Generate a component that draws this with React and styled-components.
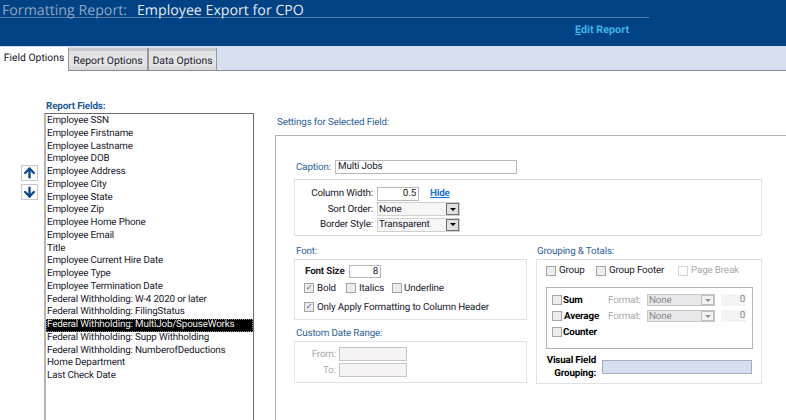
import React from "react";
import styled, { createGlobalStyle } from "styled-components";
import { ArrowUp, ArrowDown } from "lucide-react";

const GlobalStyle = createGlobalStyle`
  html, body { margin: 0; padding: 0; background: #fff; }
  body {
    font-family: Roboto, Tahoma, sans-serif;
    font-size: 9.8px;
    letter-spacing: -0.15px;
    text-rendering: geometricPrecision;
    color: #20202c;
  }
`;

const Page = styled.div`
  width: 786px;
  height: 420px;
  overflow: hidden;
`;

const Header = styled.header`
  height: 46px;
  box-sizing: border-box;
  background: #004283;
  padding-top: 1px;
`;

const TitleBar = styled.div`
  width: 649px;
  height: 17px;
  box-sizing: border-box;
  border-bottom: 1px solid #5a7ca6;
  padding-left: 2px;
  display: flex;
  gap: 10px;
  font-family: "Open Sans", sans-serif;
  font-size: 14.2px;
  letter-spacing: 0;
  line-height: 19px;
  white-space: nowrap;
`;

const TitleLabel = styled.span`
  color: #8fa6c4;
`;

const TitleName = styled.span`
  color: #e4ebf4;
`;

const EditRow = styled.div`
  padding: 5px 0 0 575px;
`;

const EditLink = styled.a`
  color: #45b4ee;
  font-weight: 700;
  font-size: 10.6px;
  letter-spacing: 0.1px;
  line-height: 13px;
  span { text-decoration: underline; }
`;

const TabBar = styled.nav`
  height: 25px;
  box-sizing: border-box;
  background: #d6dfef;
  border-bottom: 1px solid #8c8c94;
  display: flex;
  align-items: flex-end;
`;

const Tab = styled.div`
  height: ${(p) => (p.$active ? "24px" : "23px")};
  box-sizing: border-box;
  width: ${(p) => p.$w}px;
  margin-bottom: -1px;
  line-height: ${(p) => (p.$active ? "22px" : "25px")};
  font-size: 10.4px;
  letter-spacing: 0;
  text-align: center;
  color: #20202c;
  background: ${(p) => (p.$active ? "#fff" : "linear-gradient(#c8c8d0 0 3px, #e4e4e6 3px 75%, #d4d4d6)")};
  border-left: ${(p) => (p.$active ? "0" : "1px solid #96969c")};
  border-right: ${(p) => (p.$active ? "0" : "1px solid #96969c")};
  border-bottom: ${(p) => (p.$active ? "0" : "1px solid #8c8c94")};
`;

const Body = styled.main`
  display: flex;
  overflow: hidden;
`;

const LeftColumn = styled.section`
  width: 275px;
  flex: none;
  padding-top: 30px;
  box-sizing: border-box;
  display: grid;
  grid-template-columns: 44px 210px;
  grid-template-rows: 12px auto;
`;

const FieldsLabel = styled.div`
  grid-column: 2;
  padding-left: 2px;
  font-weight: 700;
  line-height: 12px;
  color: #1f5795;
`;

const Movers = styled.div`
  grid-column: 1;
  padding: 52px 0 0 21px;
  display: flex;
  flex-direction: column;
  gap: 3px;
`;

const MoveButton = styled.button`
  width: 17px;
  height: 16px;
  padding: 0;
  display: flex;
  align-items: center;
  justify-content: center;
  background: #fff;
  border: 1px solid #c8c8cc;
  color: #0a4a8c;
`;

const ListBox = styled.ul`
  grid-column: 2;
  list-style: none;
  margin: 0;
  padding: 1px 0 60px;
  height: 330px;
  border: 1px solid #6c6c6c;
  border-left: 2px solid #b4b4b4;
  box-sizing: border-box;
`;

const ListItem = styled.li`
  height: 12.75px;
  line-height: 12.75px;
  padding-left: 1px;
  white-space: nowrap;
  background: ${(p) => (p.$selected ? "#000" : "transparent")};
  color: ${(p) => (p.$selected ? "#f0f0f0" : "#20202c")};
  outline: ${(p) => (p.$selected ? "1px dotted #888" : "none")};
  outline-offset: -1px;
`;

const RightColumn = styled.section`
  flex: none;
  width: 540px;
  padding-top: 45px;
`;

const SectionTitle = styled.div`
  color: #2e5f98;
  line-height: 13px;
  padding-left: ${(p) => p.$pad ?? 2}px;
`;

const SettingsPanel = styled.div`
  margin-top: 6px;
  border: 1px solid #b0b0b8;
  border-right: 0;
  height: 300px;
  box-sizing: border-box;
  padding: 24px 0 0 18px;
`;

const CaptionRow = styled.div`
  display: flex;
  align-items: center;
  height: 14px;
  padding-left: 2px;
  color: #2e5f98;
`;

const CaptionLabel = styled.span`
  width: 39px;
  flex: none;
`;

const TextField = styled.div`
  box-sizing: border-box;
  width: ${(p) => p.$w}px;
  height: ${(p) => p.$h ?? 14}px;
  line-height: ${(p) => (p.$h ?? 14) - 2}px;
  padding: 0 2px;
  border: 1px solid ${(p) => p.$line ?? "#b8b8bc"};
  background: ${(p) => p.$bg ?? "#fff"};
  color: #20202c;
  text-align: ${(p) => (p.$right ? "right" : "left")};
`;

const GroupBox = styled.div`
  box-sizing: border-box;
  border: 1px solid #e2e2e6;
  width: ${(p) => p.$w}px;
  height: ${(p) => p.$h}px;
  padding: ${(p) => p.$pad ?? "0"};
`;

const ColumnBox = styled(GroupBox)`
  margin-top: 5px;
  display: grid;
  grid-template-columns: 74px auto;
  grid-auto-rows: 15.5px;
  column-gap: 4px;
  justify-content: start;
  align-items: center;
`;

const RowLabel = styled.span`
  text-align: right;
  white-space: nowrap;
`;

const InlineRow = styled.div`
  display: flex;
  align-items: center;
  gap: ${(p) => p.$gap ?? 0}px;
`;

const HideLink = styled.a`
  color: #1a72d8;
  font-weight: 700;
  text-decoration: underline;
  margin-left: 11px;
`;

const Select = styled.div`
  box-sizing: border-box;
  width: ${(p) => p.$w}px;
  height: ${(p) => p.$h ?? 14}px;
  padding-left: 1px;
  display: flex;
  align-items: center;
  justify-content: space-between;
  background: ${(p) => (p.$disabled ? "#e8e8ea" : "#f6f6f6")};
  border: 1px solid ${(p) => (p.$disabled ? "#c4c4c8" : "#d0d0d0")};
  color: ${(p) => (p.$disabled ? "#8a8a8e" : "#20202c")};
`;

const SelectButton = styled.span`
  width: 13px;
  height: 100%;
  box-sizing: border-box;
  flex: none;
  display: flex;
  align-items: center;
  justify-content: center;
  background: ${(p) => (p.$disabled ? "#f2f2f2" : "#e0e0e0")};
  border: 1px solid ${(p) => (p.$disabled ? "#c0c0c4" : "#707070")};
  &::after {
    content: "";
    border-left: 3px solid transparent;
    border-right: 3px solid transparent;
    border-top: 3px solid ${(p) => (p.$disabled ? "#909094" : "#000")};
  }
`;

const LowerGrid = styled.div`
  display: flex;
  gap: 9px;
  margin-top: 7px;
`;

const LowerColumn = styled.div`
  width: ${(p) => p.$w}px;
`;

const GroupHeading = styled(SectionTitle)`
  height: 16px;
  line-height: 17px;
  margin-top: ${(p) => p.$top ?? 0}px;
`;

const Box = styled.span`
  box-sizing: border-box;
  flex: none;
  width: 10px;
  height: 10px;
  display: inline-flex;
  align-items: center;
  justify-content: center;
  background: ${(p) => (p.$faint ? "#fff" : "#ececec")};
  border: 1px solid ${(p) => (p.$faint ? "#d4d4d8" : "#a4a4a8")};
  color: #3a5f98;
  font-size: 8px;
  line-height: 1;
`;

const CheckLabel = styled.span`
  white-space: nowrap;
  width: ${(p) => (p.$w ? `${p.$w}px` : "auto")};
  flex: none;
  padding-left: ${(p) => p.$pad ?? 3}px;
  box-sizing: border-box;
  color: ${(p) => (p.$faint ? "#a8a8ac" : "inherit")};
`;

const FontRow = styled(InlineRow)`
  height: ${(p) => p.$h}px;
`;

const BoldLabel = styled.span`
  font-weight: 700;
  width: 40px;
  flex: none;
  padding-left: 1px;
  white-space: nowrap;
  box-sizing: border-box;
`;

const DateRow = styled.div`
  display: flex;
  align-items: center;
  height: 16px;
`;

const DateLabel = styled.span`
  width: 41px;
  text-align: right;
  color: #a8a8ac;
  margin-right: 3px;
`;

const TotalsBox = styled.div`
  box-sizing: border-box;
  width: 207px;
  height: 62px;
  margin-top: 11px;
  border: 1px solid #b4b4b8;
  padding: 4px 0 0 5px;
`;

const TotalsRow = styled.div`
  display: grid;
  grid-template-columns: 56px 39px 68px 6px 25px;
  align-items: center;
  height: 16px;
`;

const TotalName = styled.div`
  display: flex;
  align-items: center;
  gap: ${(p) => p.$gap}px;
  font-weight: 700;
  color: #000;
`;

const FormatLabel = styled.span`
  color: #a8a8ac;
`;

const ZeroField = styled.div`
  grid-column: 5;
  height: 12px;
  line-height: 12px;
  background: #f6f3f4;
  text-align: right;
  color: #8a8a8e;
  padding-right: 1px;
`;

const VisualRow = styled.div`
  display: flex;
  align-items: center;
  gap: 6px;
  margin-top: 5px;
`;

const VisualLabel = styled.div`
  width: 50px;
  flex: none;
  text-align: right;
  font-weight: 700;
  line-height: 13px;
  color: #000;
  white-space: nowrap;
`;

const VisualBar = styled.div`
  width: 150px;
  height: 14px;
  box-sizing: border-box;
  background: #d6dfef;
  border: 1px solid #a8aebc;
`;

const FIELDS = [
  "Employee SSN",
  "Employee Firstname",
  "Employee Lastname",
  "Employee DOB",
  "Employee Address",
  "Employee City",
  "Employee State",
  "Employee Zip",
  "Employee Home Phone",
  "Employee Email",
  "Title",
  "Employee Current Hire Date",
  "Employee Type",
  "Employee Termination Date",
  "Federal Withholding: W-4 2020 or later",
  "Federal Withholding: FilingStatus",
  "Federal Withholding: MultiJob/SpouseWorks",
  "Federal Withholding: Supp Withholding",
  "Federal Withholding: NumberofDeductions",
  "Home Department",
  "Last Check Date",
];

function TotalLine({ name, gap, format }) {
  return (
    <TotalsRow>
      <TotalName $gap={gap}>
        <Box />
        {name}
      </TotalName>
      {format && (
        <>
          <FormatLabel>Format:</FormatLabel>
          <Select $w={68} $h={12} $disabled>
            None
            <SelectButton $disabled />
          </Select>
          <ZeroField>0</ZeroField>
        </>
      )}
    </TotalsRow>
  );
}

export default function App() {
  return (
    <Page>
      <GlobalStyle />
      <Header>
        <TitleBar>
          <TitleLabel>Formatting Report:</TitleLabel>
          <TitleName>Employee Export for CPO</TitleName>
        </TitleBar>
        <EditRow>
          <EditLink>
            <span>E</span>dit Report
          </EditLink>
        </EditRow>
      </Header>
      <TabBar>
        <Tab $active $w={68}>Field Options</Tab>
        <Tab $w={80}>Report Options</Tab>
        <Tab $w={69}>Data Options</Tab>
      </TabBar>
      <Body>
        <LeftColumn>
          <FieldsLabel>Report Fields:</FieldsLabel>
          <div />
          <Movers>
            <MoveButton><ArrowUp size={16} strokeWidth={3.8} /></MoveButton>
            <MoveButton><ArrowDown size={16} strokeWidth={3.8} /></MoveButton>
          </Movers>
          <ListBox>
            {FIELDS.map((f) => (
              <ListItem key={f} $selected={f.includes("MultiJob")}>{f}</ListItem>
            ))}
          </ListBox>
        </LeftColumn>
        <RightColumn>
          <SectionTitle>Settings for Selected Field:</SectionTitle>
          <SettingsPanel>
            <CaptionRow>
              <CaptionLabel>Caption:</CaptionLabel>
              <TextField $w={182}>Multi Jobs</TextField>
            </CaptionRow>
            <ColumnBox $w={468} $h={57} $pad="6px 0 0 4px">
              <RowLabel>Column Width:</RowLabel>
              <InlineRow>
                <TextField $w={42} $right>0.5</TextField>
                <HideLink>Hide</HideLink>
              </InlineRow>
              <RowLabel>Sort Order:</RowLabel>
              <Select $w={83}>None<SelectButton /></Select>
              <RowLabel>Border Style:</RowLabel>
              <Select $w={83}>Transparent<SelectButton /></Select>
            </ColumnBox>
            <LowerGrid>
              <LowerColumn $w={233}>
                <GroupHeading>Font:</GroupHeading>
                <GroupBox $w={233} $h={61} $pad="4px 0 0 9px">
                  <FontRow $h={14} $gap={5}>
                    <BoldLabel>Font Size</BoldLabel>
                    <TextField $w={32} $h={13} $right>8</TextField>
                  </FontRow>
                  <FontRow $h={20}>
                    <Box>✓</Box>
                    <CheckLabel $w={32}>Bold</CheckLabel>
                    <Box />
                    <CheckLabel $w={36}>Italics</CheckLabel>
                    <Box />
                    <CheckLabel $pad={2}>Underline</CheckLabel>
                  </FontRow>
                  <FontRow $h={18}>
                    <Box>✓</Box>
                    <CheckLabel>Only Apply Formatting to Column Header</CheckLabel>
                  </FontRow>
                </GroupBox>
                <GroupHeading $top={5}>Custom Date Range:</GroupHeading>
                <GroupBox $w={233} $h={42} $pad="4px 0 0 0">
                  <DateRow>
                    <DateLabel>From:</DateLabel>
                    <TextField $w={68} $bg="#f6f3f5" $line="#c4c4c8" />
                  </DateRow>
                  <DateRow>
                    <DateLabel>To:</DateLabel>
                    <TextField $w={68} $bg="#f6f3f5" $line="#c4c4c8" />
                  </DateRow>
                </GroupBox>
              </LowerColumn>
              <LowerColumn $w={226}>
                <GroupHeading $pad={1}>Grouping &amp; Totals:</GroupHeading>
                <GroupBox $w={226} $h={125} $pad="5px 0 0 9px">
                  <InlineRow>
                    <Box />
                    <CheckLabel $w={40}>Group</CheckLabel>
                    <Box />
                    <CheckLabel $w={72}>Group Footer</CheckLabel>
                    <Box $faint />
                    <CheckLabel $faint>Page Break</CheckLabel>
                  </InlineRow>
                  <TotalsBox>
                    <TotalLine name="Sum" gap={1} format />
                    <TotalLine name="Average" gap={2} format />
                    <TotalLine name="Counter" gap={1} />
                  </TotalsBox>
                  <VisualRow>
                    <VisualLabel>Visual Field<br />Grouping:</VisualLabel>
                    <VisualBar />
                  </VisualRow>
                </GroupBox>
              </LowerColumn>
            </LowerGrid>
          </SettingsPanel>
        </RightColumn>
      </Body>
    </Page>
  );
}
